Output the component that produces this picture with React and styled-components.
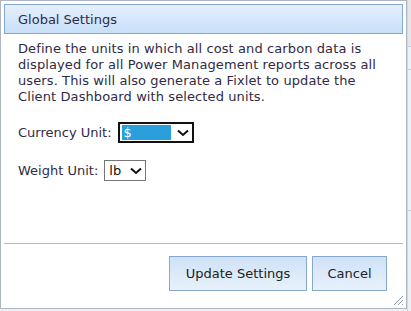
import React from 'react'
import styled, { createGlobalStyle } from 'styled-components'

const Global = createGlobalStyle`
  html, body {
    margin: 0;
    padding: 0;
    background: #eef0f3;
  }
  body {
    font-family: Verdana, "DejaVu Sans", sans-serif;
    font-size: 13px;
    color: #302b45;
  }
`

const Page = styled.div`
  display: flex;
  width: 411px;
  height: 311px;
  overflow: hidden;
`

const Dialog = styled.div`
  position: relative;
  box-sizing: border-box;
  width: 407px;
  height: 309px;
  flex: none;
  background: #fff;
  border: 1px solid #aeb6c4;
  padding: 3px;
  display: flex;
  flex-direction: column;
`

const Backdrop = styled.div`
  flex: 1;
  display: flex;
  flex-direction: column;
  border-left: 1px solid #d4d8de;
`

const BackdropCell = styled.div`
  height: ${p => p.h}px;
  background: ${p => p.bg || '#f0f1f3'};
  border-bottom: 1px solid #c9cdd3;
`

const Header = styled.div`
  box-sizing: border-box;
  height: 30px;
  border: 1px solid #86a9cd;
  background: linear-gradient(to bottom, #e5effc, #c7dff9);
  display: flex;
  align-items: center;
  padding-left: 13px;
`

const Body = styled.div`
  flex: 1;
  padding: 7px 14px 0 14px;
`

const Intro = styled.p`
  margin: 0;
  line-height: 16px;
  letter-spacing: 0.1px;
`

const Field = styled.div`
  display: flex;
  align-items: center;
  gap: 6px;
  margin-top: ${p => p.top}px;
`

const Select = styled.div`
  box-sizing: border-box;
  width: ${p => p.w}px;
  height: ${p => p.h}px;
  display: flex;
  align-items: center;
  padding: 0 3px 0 ${p => (p.focused ? 2 : 4)}px;
  border: ${p => (p.focused ? '2px solid #111' : '1px solid #767676')};
  background: #fff;
`

const Value = styled.span`
  flex: ${p => (p.focused ? '1' : 'none')};
  align-self: stretch;
  display: flex;
  align-items: center;
  padding-left: ${p => (p.focused ? 2 : 0)}px;
  margin: ${p => (p.focused ? '1px 6px 1px 0' : '0 6px 0 0')};
  background: ${p => (p.focused ? '#2a9fdc' : 'transparent')};
  color: ${p => (p.focused ? '#fff' : '#111')};
`

const Chevron = () => (
  <svg width="12" height="8" viewBox="0 0 12 8" style={{ marginLeft: 'auto' }}>
    <path d="M1 1.5 L6 6 L11 1.5" fill="none" stroke="#111" strokeWidth="2" />
  </svg>
)

const Divider = styled.div`
  height: 1px;
  background: #b4bac6;
  margin: 0 0 12px 0;
`

const Footer = styled.div`
  display: flex;
  justify-content: flex-end;
  gap: 5px;
  padding: 0 16px 14px 0;
`

const Button = styled.button`
  box-sizing: border-box;
  height: 35px;
  width: ${p => p.w}px;
  padding: 0;
  font-family: inherit;
  font-size: 13px;
  color: #222;
  border: 1px solid #85a8cc;
  background: linear-gradient(to bottom, #cfe2f7, #e8f1fc);
  border-radius: 0;
`

const Grip = () => (
  <svg
    width="12"
    height="12"
    viewBox="0 0 12 12"
    style={{ position: 'absolute', right: 2, bottom: 2 }}
  >
    <path d="M11 2 L2 11 M11 6 L6 11 M11 10 L10 11" stroke="#8a94a6" strokeWidth="1" />
  </svg>
)

export default function App() {
  return (
    <Page>
      <Global />
      <Dialog>
        <Header>Global Settings</Header>
        <Body>
          <Intro>
            Define the units in which all cost and carbon data is displayed for all Power
            Management reports across all users. This will also generate a Fixlet to update the
            Client Dashboard with selected units.
          </Intro>
          <Field top={17}>
            <span>Currency Unit:</span>
            <Select focused w={76} h={21}>
              <Value focused>$</Value>
              <Chevron />
            </Select>
          </Field>
          <Field top={17}>
            <span>Weight Unit:</span>
            <Select w={42} h={21}>
              <Value>lb</Value>
              <Chevron />
            </Select>
          </Field>
        </Body>
        <Divider />
        <Footer>
          <Button w={138}>Update Settings</Button>
          <Button w={75}>Cancel</Button>
        </Footer>
        <Grip />
      </Dialog>
      <Backdrop>
        <BackdropCell h={46} bg="#e4e6ea" />
        <BackdropCell h={22} />
        <BackdropCell h={140} />
      </Backdrop>
    </Page>
  )
}
